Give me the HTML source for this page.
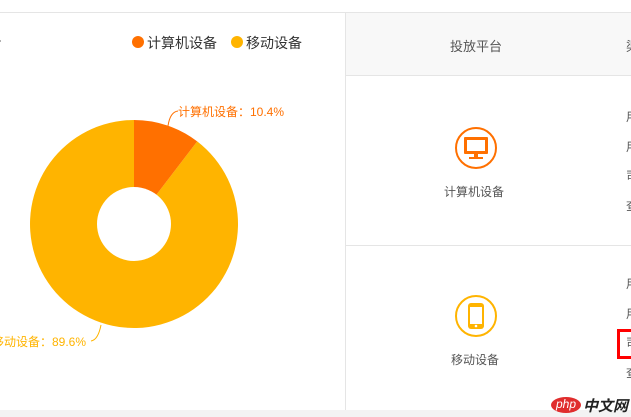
<!DOCTYPE html>
<html><head><meta charset="utf-8"><style>
*{margin:0;padding:0;box-sizing:border-box}
body{width:631px;height:417px;overflow:hidden;background:#fff;font-family:"Liberation Sans","Noto Sans CJK SC",sans-serif;position:relative;color:#555}
.a{position:absolute;white-space:nowrap}
</style></head><body>
<div class="a" style="left:0;top:12px;width:631px;height:1px;background:#e5e5e5"></div>
<div class="a" style="left:0;top:410px;width:631px;height:7px;background:#f3f3f3"></div>
<div class="a" style="left:345px;top:13px;width:286px;height:62px;background:#f8f8f8"></div>
<div class="a" style="left:345px;top:13px;width:1px;height:397px;background:#e5e5e5"></div>
<div class="a" style="left:345px;top:75px;width:286px;height:1px;background:#e5e5e5"></div>
<div class="a" style="left:345px;top:245px;width:286px;height:1px;background:#e5e5e5"></div>
<div class="a" style="left:450px;top:36px;font-size:13px;color:#555">投放平台</div>
<div class="a" style="left:626px;top:36px;font-size:13px;color:#555">渠</div>
<svg class="a" style="left:0;top:0" width="631" height="417">
<circle cx="0" cy="41" r="1" fill="#999"/>
<circle cx="138" cy="42" r="6" fill="#ff7000"/>
<circle cx="237" cy="42" r="6" fill="#ffb400"/>
<path d="M134 224 L134 120 A104 104 0 1 0 197.2 141.4 Z" fill="#ffb400"/>
<path d="M134 224 L134 120 A104 104 0 0 1 197.2 141.4 Z" fill="#ff7000"/>
<circle cx="134" cy="224" r="37" fill="#fff"/>
<path d="M168 126 Q170 112 178 111" stroke="#ff7000" fill="none"/>
<path d="M101 325 Q98 340 91 341" stroke="#ffb400" fill="none"/>
<circle cx="476" cy="148" r="20" fill="none" stroke="#ff7000" stroke-width="2"/>
<rect x="464" y="137" width="24" height="17" rx="1" fill="#ff7000"/>
<rect x="467" y="140" width="18" height="11" fill="#fff"/>
<rect x="474" y="154" width="4" height="4" fill="#ff7000"/>
<rect x="469" y="157" width="14" height="2" fill="#ff7000"/>
<circle cx="476" cy="316" r="20" fill="none" stroke="#ffb400" stroke-width="2"/>
<rect x="468" y="303" width="16" height="26" rx="3" fill="#ffb400"/>
<rect x="470" y="307" width="12" height="17" fill="#fff"/>
<circle cx="476" cy="326" r="1.3" fill="#fff"/>
<rect x="618.5" y="330.5" width="14" height="27" fill="none" stroke="#f00" stroke-width="3"/>
</svg>
<div class="a" style="left:147px;top:33px;font-size:14px;color:#333">计算机设备</div>
<div class="a" style="left:246px;top:33px;font-size:14px;color:#333">移动设备</div>
<div class="a" style="left:178px;top:103px;font-size:12px;color:#ff7000">计算机设备：10.4%</div>
<div class="a" style="left:-8px;top:333px;font-size:12px;color:#ffb400">移动设备：89.6%</div>
<div class="a" style="left:444px;top:183px;font-size:12px;color:#555">计算机设备</div>
<div class="a" style="left:451px;top:351px;font-size:12px;color:#555">移动设备</div>
<div class="a" style="left:626px;top:103px;font-size:12px;line-height:29.5px;color:#555">用<br>用<br>司<br>查</div>
<div class="a" style="left:626px;top:270px;font-size:12px;line-height:29.5px;color:#555">用<br>用<br>司<br>查</div>
<div class="a" style="left:551px;top:397px;width:30px;height:16px;border-radius:50%;background:#e02d2d;color:#fff;font-size:12px;text-align:center;line-height:15px;font-style:italic">php</div>
<div class="a" style="left:583px;top:395px;font-size:15px;color:#222;font-style:italic;font-weight:bold">中文网</div>
</body></html>
